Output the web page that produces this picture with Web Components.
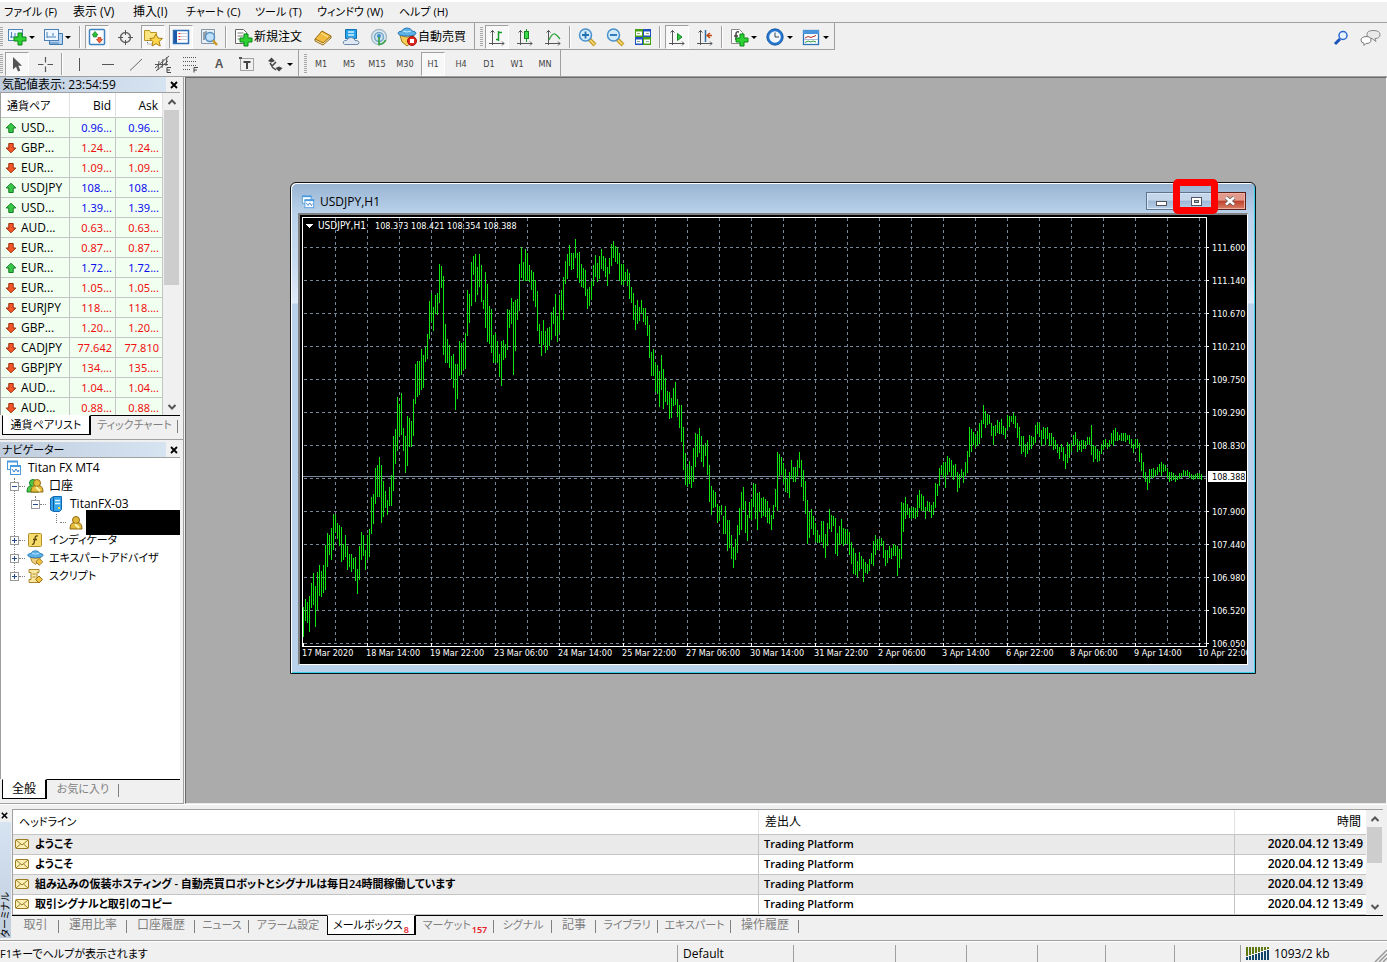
<!DOCTYPE html>
<html lang="ja">
<head>
<meta charset="utf-8">
<title>Titan FX MT4</title>
<style>
  body { margin: 0; font: 12px/16px "Open Sans", "Noto Sans CJK JP", sans-serif; font-feature-settings: "palt"; color: #000; background: #f0f0f0; }
</style>
</head>
<body>
<mt-app></mt-app>
<script>
/* ---------- icons: [viewBox, drawing, optional drawn size] ---------- */
const AXES = '<g stroke="#555" fill="none"><path d="M7.500 5v15M4 18.500h15"/><path d="M5.500 7.500l2-2 2 2M17 16.500l2 2-2 2"/></g>';
const PLUS = (x, y) => `<path d="M${x} ${y}h4v4h4v4h-4v4h-4v-4h-4v-4h4z" fill="#2fd135" stroke="#078a12"/>`;
const PERSON = (x, y, c, s) => `<g fill="${c}" stroke="${s}"><path d="M${x} ${y + 13}q0-6 4-6.500h4q4 .5 4 6.500z"/><circle cx="${x + 6}" cy="${y + 4}" r="3.500"/></g><path d="M${x + 5} ${y + 8}l4 4" stroke="#fff6b0" stroke-width="2"/>`;
const HAT = '<path d="M3 8q0-1.500 4-2 1-3 5-3t5 3q4 .5 4 2 0 3-9 3t-9-3z" fill="#5cb2e6" stroke="#2a78b4"/><path d="M8 6q4 2 8 0" stroke="#c8ecff" fill="none"/>';
const ICONS = {
  newchart: ['0 0 24 24', '<rect x="3.500" y="4.500" width="14" height="11" fill="#eef6ff" stroke="#4d86b8"/><path d="M6.500 7v6M5 12h9M10 8v3" stroke="#4d86b8"/>' + PLUS(13, 8)],
  profiles: ['0 0 24 24', '<path d="M8.500 8.500h13v11h-13z" fill="#b5d3f0" stroke="#3b78b4"/><rect x="3.500" y="4.500" width="14" height="11" fill="#eef6ff" stroke="#4a80b5"/><path d="M6 7v6M6 12h9M12 8v3M9 18h9" stroke="#4a80b5"/>'],
  market: ['0 0 24 24', '<rect x="4.500" y="4.500" width="15" height="15" rx="1" fill="#fff" stroke="#3e83c0" stroke-width="1.500"/><path d="M10 6.500l3 3.500h-1.500v2h-3v-2H7z" fill="#2cbf3a" stroke="#14862a" stroke-width=".7"/><path d="M14.500 18l3-3.500H16v-2h-3v2h-1.500z" fill="#f0623a" stroke="#b8360e" stroke-width=".7"/>'],
  cross: ['0 0 24 24', '<circle cx="12.500" cy="12.500" r="5" fill="none" stroke="#666" stroke-width="1.500"/><path d="M12.500 5v5M12.500 15v5M5 12.500h5M15 12.500h5" stroke="#555"/>'],
  navi: ['0 0 24 24', '<path d="M3.500 5.500h5l1 2h6v8h-12z" fill="#fbe580" stroke="#b89620"/><path d="M6.500 15v4h5" stroke="#777" stroke-dasharray="1 1" fill="none"/><path d="M15 9l2 4 4.500.5-3.300 3 1 4.500-4.200-2.300-4 2.300.8-4.500-3-3 4-.5z" fill="#ffd54a" stroke="#a88018"/>'],
  terminal: ['0 0 24 24', '<rect x="4.500" y="5.500" width="15" height="13" fill="#fff" stroke="#2f6fb6" stroke-width="1.500"/><path d="M6.500 6v12" stroke="#1d58a8" stroke-width="3"/><path d="M9.500 8.500h2M9.500 11.500h2M9.500 14.500h2" stroke="#d33"/><path d="M12 8.500h6M12 11.500h6M12 14.500h6" stroke="#ccd"/>'],
  tester: ['0 0 24 24', '<path d="M4.500 4.500h13v14h-13z" fill="#e6eef6" stroke="#8797a8"/><path d="M7 7v8M9 6v6M14 7v5" stroke="#456"/><circle cx="13" cy="12" r="4.500" fill="#bfe0f8" stroke="#5590c0" stroke-width="1.500"/><path d="M16 15.500l4 4.500" stroke="#c99a22" stroke-width="2.500"/>'],
  order: ['0 0 24 24', '<path d="M4.500 4.500h8l3 3v11h-11z" fill="#fff" stroke="#666"/><path d="M6.500 8h6M6.500 11h6M6.500 14h6" stroke="#777"/>' + PLUS(13, 9)],
  book: ['0 0 24 24', '<path d="M4 14l7-8 9 5-8 8z" fill="#f0bb3e" stroke="#9a6a10"/><path d="M4 14v2l8 4 8-7v-2l-8 7z" fill="#fff3c4" stroke="#9a6a10"/><path d="M10 8l7 4" stroke="#ffe9a0"/>'],
  cloud: ['0 0 24 24', '<path d="M6.500 4.500h11v9h-11z" fill="#29a3e8" stroke="#1272b4"/><path d="M9 7h6M9 10h6" stroke="#d8f2ff" stroke-width="1.500"/><path d="M5.500 19.500q-2-1-1-3 1-1.500 3-1 1.500-3.500 5-3 3 .3 3.500 3 3.500-.5 4 2 0 2-2 2z" fill="#dfe8f2" stroke="#6a86a8"/>'],
  signal: ['0 0 24 24', '<circle cx="12" cy="12" r="7.500" fill="#e4edf2" stroke="#a6bccb" stroke-width="1.500"/><circle cx="12" cy="12" r="4.500" fill="#cfe2ee" stroke="#6fa6c6" stroke-width="1.500"/><circle cx="12" cy="11" r="2" fill="#3d8ec4"/><path d="M12 12v7.500q5-.5 6.500-4.500" fill="none" stroke="#3ea44c" stroke-width="1.800"/>'],
  auto: ['0 0 24 24', '<path d="M5 10q7 4 14 0l-2 7-5 4-5-4z" fill="#f5cc58" stroke="#a07a18"/>' + HAT + '<circle cx="17" cy="16" r="4.500" fill="#e0261c" stroke="#a8120c"/><path d="M15 14h4v4h-4z" fill="#fff"/>'],
  bar: ['0 0 24 24', AXES + '<path d="M13.500 6v10M11 14.500h2M14 7.500h3" stroke="#189a28" stroke-width="1.500"/>'],
  candle: ['0 0 24 24', AXES + '<path d="M13.500 4v13" stroke="#189a28"/><rect x="11.500" y="6.500" width="4" height="7" fill="#3bd84a" stroke="#128a20"/>'],
  line: ['0 0 24 24', AXES + '<path d="M8 15q3-7 6-6 2 1 5 5" stroke="#2aa53a" fill="none" stroke-width="1.300"/>'],
  zin: ['0 0 24 24', '<path d="M14 14l6 6" stroke="#c79a25" stroke-width="4"/><path d="M15 15l4.500 4.500" stroke="#ffe27c" stroke-width="1.500"/><circle cx="10.500" cy="10" r="6" fill="#d2ebfb" stroke="#4a90cc" stroke-width="1.500"/><path d="M7 10h7M10.500 6.500v7" stroke="#2470b0" stroke-width="1.800"/>'],
  zout: ['0 0 24 24', '<path d="M14 14l6 6" stroke="#c79a25" stroke-width="4"/><path d="M15 15l4.500 4.500" stroke="#ffe27c" stroke-width="1.500"/><circle cx="10.500" cy="10" r="6" fill="#d2ebfb" stroke="#4a90cc" stroke-width="1.500"/><path d="M7 10h7" stroke="#2470b0" stroke-width="1.800"/>'],
  tile: ['0 0 24 24', '<path d="M4 4h8v8H4zM12 12h8v8h-8z" fill="#48a012"/><path d="M12 4h8v8h-8zM4 12h8v8H4z" fill="#1f50c0"/><path d="M5 6.500h6v4H5zM13 6.500h6v4h-6zM5 14.500h6v4H5zM13 14.500h6v4h-6z" fill="#fff"/><path d="M6 8.500h3M15 8.500h3M6 16.500h3M15 16.500h3" stroke="#8a8"/>'],
  scroll: ['0 0 24 24', AXES + '<path d="M12.500 8.500l4.500 3.500-4.500 3.500z" fill="#35c545" stroke="#128a20"/>'],
  shift: ['0 0 24 24', AXES + '<path d="M12.500 5v12" stroke="#2f6fa8" stroke-width="1.500"/><path d="M19 10.500h-4M17 8l-3 2.500 3 2.500" stroke="#c24a14" fill="none" stroke-width="1.500"/>'],
  indi: ['0 0 24 24', '<path d="M4.500 4.500h8l3 3v11h-11z" fill="#fff" stroke="#888"/><path d="M12 7q-3-1-3 2v6M7 11h4" stroke="#444" fill="none" stroke-width="1.500"/>' + PLUS(13, 9)],
  clock: ['0 0 24 24', '<circle cx="12" cy="12" r="7" fill="#f2f7fc" stroke="#2476cf" stroke-width="2.500"/><circle cx="12" cy="12" r="8.200" fill="none" stroke="#0f4e9c" stroke-width=".8"/><path d="M12 7.500V12h4" fill="none" stroke="#345"/>'],
  templ: ['0 0 24 24', '<rect x="4.500" y="5.500" width="15" height="14" fill="#fff" stroke="#2c74b8" stroke-width="1.300"/><path d="M4 5h16v4H4z" fill="#4a96dc"/><path d="M6 13l3-1.500 3 1 5-2" stroke="#b03018" fill="none"/><path d="M6 17.500l3-1.500 3 1 2-1 3 1" stroke="#2a9a3a" fill="none"/><path d="M5 14.500h14" stroke="#abd"/>'],
  search: ['0 0 24 24', '<path d="M11 13l-5 5" stroke="#1c53b8" stroke-width="3"/><circle cx="14" cy="9.500" r="4" fill="#e9f3fd" stroke="#2a67d0" stroke-width="1.500"/>'],
  chat: ['0 0 24 24', '<path d="M14 4.500q7 0 7 4t-5 4l1 3-4-3q-5 0-5-4t6-4z" fill="#e9e9e9" stroke="#888"/><path d="M7 10.500q5 0 5 3.500t-5 3.500l-2 2v-2.200q-3-.5-3-3.300t5-3.500z" fill="#fff" stroke="#777"/>'],
  arrow: ['0 0 24 24', '<path d="M8 5v12.500l3-2.800 2 4.800 2.300-1-2-4.700H17z" fill="#555"/>'],
  cursor: ['0 0 24 24', '<path d="M12.500 5v5.500M12.500 14.500V20M5 12.500h5.500M14.500 12.500H20" stroke="#555" stroke-width="1.200"/>'],
  vline: ['0 0 24 24', '<path d="M12.500 6v13" stroke="#555"/>'],
  hline: ['0 0 24 24', '<path d="M7 12.500h12" stroke="#555"/>'],
  trend: ['0 0 24 24', '<path d="M7 18.500L19 7" stroke="#666"/>'],
  chan: ['0 0 24 24', '<g stroke="#555" fill="none"><path d="M4 16L18 4M5 19L17 9M8 9l-1 9M12 7l-1 9M16 5l-1 9M4 12.500h13"/></g><path d="M20 15.500h-4v5h4M16 18h3" stroke="#444" fill="none"/>'],
  fibo: ['0 0 24 24', '<path d="M4 5.500h14M4 9.500h14M4 13.500h14M4 17.500h8" stroke="#555" stroke-dasharray="1 1"/><path d="M19 15.500h-4v5M15 18h3" stroke="#444" fill="none"/>'],
  tbox: ['0 0 24 24', '<path d="M5.500 6.500h13v12h-13z" fill="none" stroke="#555" stroke-dasharray="1 1"/><path d="M8.500 10h7M12 10v7" stroke="#444" stroke-width="2"/><path d="M4 5h3v2H4z" fill="#555"/>'],
  arrows: ['0 0 24 24', '<path d="M5 9l3.500-3.500L12 9l-3.500 1.500zM12.500 16l3.500-1.500 3.500 1.500-3.500 3.500z" fill="#444"/><path d="M7 11l2 3 4-4" stroke="#444" stroke-width="1.500" fill="none"/><path d="M9 15l4 3" stroke="#444" stroke-width="1.500"/>'],
  up: ['0 0 12 12', '<path d="M6 1.200L10.800 6H8.200v4.500H3.800V6H1.200z" fill="#38c848" stroke="#157a22"/>'],
  down: ['0 0 12 12', '<path d="M6 10.800L1.200 6h2.600V1.500h4.400V6h2.600z" fill="#f4572a" stroke="#9c2a0a"/>'],
  mail: ['0 0 14 10', '<rect x=".5" y=".5" width="13" height="9" rx="1" fill="#fdf0b4" stroke="#9a7a22"/><path d="M1 1l6 5 6-5M1 9l4.500-4M13 9L8.500 5" stroke="#9a7a22" fill="none"/>'],
  chart: ['0 0 16 16', '<rect x="1.500" y="1.500" width="10" height="8" fill="#fff" stroke="#4a9ae0"/><path d="M1 1.500h11" stroke="#4a9ae0" stroke-width="2"/><rect x="4.500" y="5.500" width="10" height="9" fill="#fff" stroke="#4a9ae0"/><path d="M4 6h11" stroke="#4a9ae0" stroke-width="2"/><path d="M6 9l2 3 2-3 2 3 1-2" fill="none" stroke="#3a80c8"/>'],
  people: ['0 0 18 16', PERSON(1, 1, '#4cc84c', '#1f7f24') + PERSON(5, 1, '#e6bd3c', '#8f6a10')],
  server: ['0 0 16 16', '<path d="M2.500 2.500l3-2h8v13l-2 2h-6l-3-1.500z" fill="#35a6ee" stroke="#1268b0"/><path d="M5.500 1v14" stroke="#0f5c9e"/><path d="M7 4.500h5M7 7.500h5" stroke="#dff3ff" stroke-width="1.500"/><path d="M10 12h2" stroke="#fd3" stroke-width="2"/>'],
  person: ['0 0 14 16', PERSON(1, 2, '#e2b93a', '#8f6a10')],
  func: ['0 0 16 16', '<rect x="1.500" y="1.500" width="13" height="13" rx="1" fill="#f7dc6c" stroke="#b08f28"/><path d="M11 4q-3-1-3 3l-1 4q-.5 2-2 1M6 7.500h4" fill="none" stroke="#5a4408" stroke-width="1.300"/>'],
  expert: ['1 1 21 21', '<path d="M6 10q6 4 12 0l-2 6-4 3-4-3z" fill="#f0d080" stroke="#9c7a28"/>' + HAT + '<path d="M16.500 12l4 4-4 4-4-4z" fill="#f0c440" stroke="#967018"/>', 18],
  script: ['0 0 16 16', '<path d="M2 1.500h10v3h-2v7h2v3H2v-3h2v-7H2z" fill="#fbe8a0" stroke="#a8862c"/><path d="M5.500 6h3M5.500 9h3" stroke="#a8862c"/><path d="M12 8l3.500 3.500L12 15l-3.500-3.500z" fill="#f0c440" stroke="#967018"/>'],
  close: ['0 0 10 10', '<path d="M2 2l6 6M8 2L2 8" stroke="#000" stroke-width="1.800"/>'],
  chevup: ['0 0 10 10', '<path d="M1.500 7L5 3.500 8.500 7" fill="none" stroke="#555" stroke-width="2"/>'],
  chevdown: ['0 0 10 10', '<path d="M1.500 3L5 6.500 8.500 3" fill="none" stroke="#555" stroke-width="2"/>'],
  traffic: ['0 0 24 14', '<path d="' + [0,3,6,9,12,15,18,21].map((x, i) => `M${x} 0h2v${9 - i}h-2z`).join('') + '" fill="#5f7a10"/><path d="' + [0,3,6,9,12,15,18,21].map((x, i) => `M${x} ${10 - i}h2V13h-2z`).join('') + '" fill="#10466a"/>']
};

/* ---------- small base class ---------- */
class Base extends HTMLElement {
  connectedCallback() {
    if (this.shadowRoot) return;
    const t = document.createElement('template');
    t.innerHTML = '<style>*{box-sizing:border-box}button{font:inherit;color:inherit;font-feature-settings:inherit;border:0;background:none;padding:0;margin:0}.k{font-size:11px}' + this.css() + '</style>' + this.html();
    this.attachShadow({ mode: 'open' }).append(t.content.cloneNode(true));
  }
  attr(n, d = '') { return this.hasAttribute(n) ? this.getAttribute(n) : d; }
}
const def = (n, css, html) => customElements.define(n, class extends Base {
  css() { return css; }
  html() { return typeof html === 'function' ? html(this) : html; }
});
/* labels with katakana or hiragana are set one step smaller */
const kana = t => /[\u3041-\u30ff]/.test(t) ? 'k' : '';

def('mt-icon', ':host{display:inline-flex;flex:none}svg{display:block}', el => {
  const [vb, body, size] = ICONS[el.attr('name')];
  const [, , w, h] = vb.split(' ');
  return `<svg viewBox="${vb}" width="${el.attr('size', size || w)}" height="${el.attr('size', size || h)}" aria-hidden="true">${body}</svg>`;
});

/* ---------- menu ---------- */
def('mt-menu', `:host{display:block;border-top:2px solid #fff;border-bottom:1px solid #a0a0a0}
  nav{display:grid;grid-template-columns:69px 60px 53px 69px 62px 82px auto;height:20px;padding-left:4px;align-items:center}
  button{text-align:left;white-space:nowrap}`,
  '<nav>' + ['ファイル (F)', '表示 (V)', '挿入(I)', 'チャート (C)', 'ツール (T)', 'ウィンドウ (W)', 'ヘルプ (H)'].map(t => `<button class="${kana(t)}">${t}</button>`).join('') + '</nav>');

/* ---------- toolbar pieces ---------- */
def('mt-tool', `:host{display:flex;flex:none}
  button{display:flex;align-items:center;height:24px;min-width:24px;justify-content:center;border:1px solid transparent;white-space:nowrap}
  :host([on]) button{border-color:#a0a0a0 #fff #fff #a0a0a0;background:#f8f8f8}
  :host([menu]) button{width:32px;justify-content:flex-start}
  :host([frame]) button{font:9px/12px "DejaVu Sans Condensed","DejaVu Sans",sans-serif;color:#444}
  :host([letter]) button{font:bold 12px/16px "Liberation Sans",sans-serif;color:#555}
  :host([text]) button{padding-right:4px}
  mt-icon{margin:0 -1px}
  i{border:3px solid transparent;border-top-color:#000;border-bottom:0;margin-left:1px}`,
  el => `<button ${el.attr('icon') && !el.hasAttribute('text') ? `aria-label="${el.attr('icon')}"` : ''}>${el.attr('icon') ? `<mt-icon name="${el.attr('icon')}"></mt-icon>` : ''}<slot></slot>${el.hasAttribute('menu') ? '<i></i>' : ''}</button>`);
def('mt-sep', ':host{display:block;flex:none;width:2px;height:22px;border-left:1px solid #a0a0a0;border-right:1px solid #fff}', '');
def('mt-group', `:host{display:flex;box-sizing:border-box;align-items:center;gap:4px;height:100%;padding:2px 3px 0 0;border-right:1px solid #a0a0a0;border-bottom:1px solid #a0a0a0}
  .grip{width:3px;height:20px;margin:0 -2px 0 var(--start,0);background:repeating-linear-gradient(#a8a8a8 0 1px,#f0f0f0 1px 2px)}`, '<span class="grip"></span><slot></slot>');

def('mt-toolbars', `:host{display:block;border-bottom:1px solid #a0a0a0}
  .row{display:flex;height:27px;align-items:center}
  .row.two{height:26px}.row.two mt-group{border-bottom:0}
  mt-group.n{--start:5px}
  .wide{margin-left:2px}
  .right{margin-left:auto;display:flex;gap:6px;padding:2px 4px 0 0}`,
  () => {
    const b = (icon, extra = '') => `<mt-tool icon="${icon}" ${extra}></mt-tool>`;
    const s = '<mt-sep></mt-sep>';
    return `<div class="row"><mt-group>${b('newchart', 'menu')}${b('profiles', 'menu')}<mt-sep class="wide"></mt-sep>${b('market', 'on')}${b('cross')}${b('navi', 'on')}${b('terminal', 'on')}${b('tester')}${s}
    <mt-tool icon="order" text>新規注文</mt-tool>${b('book')}${b('cloud')}${b('signal')}<mt-tool icon="auto" text>自動売買</mt-tool></mt-group>
    <mt-group class="n">${b('bar', 'on')}${b('candle')}${b('line')}${s}${b('zin')}${b('zout')}${b('tile')}${s}${b('scroll', 'on')}${b('shift')}${s}${b('indi', 'menu')}${b('clock', 'menu')}${b('templ', 'menu')}</mt-group>
    <div class="right">${b('search')}${b('chat')}</div></div>
    <div class="row two"><mt-group>${b('arrow', 'on')}${b('cursor')}${s}${b('vline')}${b('hline')}${b('trend')}${b('chan')}${b('fibo')}<mt-tool letter>A</mt-tool>${b('tbox')}${b('arrows', 'menu')}</mt-group>
    <mt-group class="n">${['M1', 'M5', 'M15', 'M30', 'H1', 'H4', 'D1', 'W1', 'MN'].map(t => `<mt-tool frame ${t === 'H1' ? 'on' : ''}>${t}</mt-tool>`).join('')}</mt-group></div>`;
  });

/* ---------- shared panel pieces ---------- */
def('mt-title', `:host{display:flex;height:15px;align-items:center;padding-right:3px}
  span{flex:1;height:15px;line-height:15px;padding-left:2px;background:linear-gradient(90deg,#bfcddd,#d6e4f2);white-space:nowrap;overflow:hidden;margin-right:2px}
  button{width:12px;height:12px;display:flex;align-items:center;justify-content:center}`,
  '<span><slot></slot></span><button aria-label="閉じる"><mt-icon name="close"></mt-icon></button>');

def('mt-scroll', `:host{display:flex;flex-direction:column;flex:none;width:17px;background:#f0f0f0}
  button{height:17px;display:flex;align-items:center;justify-content:center;flex:none}
  .track{flex:1;padding:0 1px}.thumb{height:var(--thumb);background:#cdcdcd}`,
  '<button aria-label="上へ"><mt-icon name="chevup"></mt-icon></button><div class="track"><div class="thumb"></div></div><button aria-label="下へ"><mt-icon name="chevdown"></mt-icon></button>');

/* items: "label|width|badge", a leading * marks the open tab */
def('mt-tabs', `:host{display:flex;height:20px;padding-left:var(--lead,0)}
  .rule{flex:1}
  button,.rule{border-top:1px solid #000}
  button{height:20px;line-height:18px;color:#808080;white-space:nowrap;display:flex;justify-content:center;align-items:flex-start;position:relative}
  button.sep::after{content:"";position:absolute;right:0;top:4px;height:13px;border-right:1px solid #808080}
  button.on{background:#fff;color:#000;border:1px solid #000;border-top-color:#fff;border-right-width:2px}
  sub{font:9px/12px "Noto Sans",sans-serif;font-weight:600;color:#e8202c;padding-top:8px;margin-left:1px}`,
  el => { const items = el.attr('items').split(',');
    return items.map((t, i) => {
      const [l, w, b] = t.replace('*', '').split('|'), on = t[0] === '*', next = (items[i + 1] || '')[0] === '*';
      return `<button role="tab" class="${on ? 'on' : next ? '' : 'sep'} ${kana(l)}" style="width:${w}px">${l}${b ? `<sub>${b}</sub>` : ''}</button>`;
    }).join('') + '<span class="rule"></span>'; });

/* ---------- market watch ---------- */
const QUOTES = ['u|USD...|0.96...|0.96...', 'd|GBP...|1.24...|1.24...', 'd|EUR...|1.09...|1.09...', 'u|USDJPY|108....|108....', 'u|USD...|1.39...|1.39...', 'd|AUD...|0.63...|0.63...', 'd|EUR...|0.87...|0.87...', 'u|EUR...|1.72...|1.72...', 'd|EUR...|1.05...|1.05...', 'd|EURJPY|118....|118....', 'd|GBP...|1.20...|1.20...', 'd|CADJPY|77.642|77.810', 'd|GBPJPY|134....|135....', 'd|AUD...|1.04...|1.04...', 'd|AUD...|0.88...|0.88...'];
def('mt-market', `:host{display:block;padding-bottom:4px;border-bottom:1px solid #a0a0a0}
  .pane{display:flex;height:323px;overflow:hidden;margin-right:3px;border-top:1px solid #a0a0a0;border-left:1px solid #a0a0a0}
  table{flex:1;table-layout:fixed;border-collapse:separate;border-spacing:0;height:max-content;width:0}
  th{height:25px;font-weight:400;background:#fff;padding:2px 4px 0 6px;text-align:right;border-right:1px solid #e2e2e2;border-bottom:1px solid #c4c4c4}
  th:first-child{text-align:left}
  td{height:20px;background:#f0fff0;padding:0 3px 0 4px;white-space:nowrap;border-right:1px solid #c4c4c4;border-bottom:1px solid #c4c4c4}
  td:first-child div{display:flex;align-items:center;gap:4px;line-height:16px}
  td+td{text-align:right;font:11px/16px "Noto Sans",sans-serif;color:#f01010;padding:0 3px 0 0}
  .u td+td{color:#0c0cf0}
  mt-scroll{--thumb:175px}
  mt-tabs{margin-right:3px;--lead:2px}`,
  `<mt-title>気配値表示: 23:54:59</mt-title><div class="pane"><table><colgroup><col style="width:69px"><col style="width:46px"><col></colgroup><tr><th class="k">通貨ペア</th><th>Bid</th><th>Ask</th></tr>` +
  QUOTES.map(q => { const [d, s, b, a] = q.split('|'); return `<tr class="${d}"><td><div><mt-icon name="${d === 'u' ? 'up' : 'down'}"></mt-icon><span>${s}</span></div></td><td>${b}</td><td>${a}</td></tr>`; }).join('') +
  `</table><mt-scroll></mt-scroll></div><mt-tabs items="*通貨ペアリスト|89,ティックチャート|87"></mt-tabs>`);

/* ---------- navigator ---------- */
def('mt-node', `:host{display:flex;align-items:center;height:18px;padding-left:var(--pad);white-space:nowrap}
  .box{width:9px;height:9px;border:1px solid #999;background:#fff;display:flex;align-items:center;justify-content:center;flex:none;position:relative}
  .box::before{content:"";position:absolute;width:5px;border-top:1px solid #234a8c}
  .box.plus::after{content:"";position:absolute;height:5px;border-left:1px solid #234a8c}
  .dots{width:6px;border-top:1px dotted #808080;flex:none}
  mt-icon{width:20px;justify-content:center}
  .lab{margin-left:4px}
  .mask{width:94px;height:25px;background:#000;flex:none}`,
  el => { const x = el.attr('box');
    return (x ? `<span class="box ${x}"></span>` : '') + (el.hasAttribute('dots') ? '<span class="dots"></span>' : '') + `<mt-icon name="${el.attr('icon')}"></mt-icon>` + (el.hasAttribute('masked') ? '<span class="mask"></span>' : `<span class="lab ${kana(el.textContent)}"><slot></slot></span>`); });
def('mt-navigator', `:host{display:flex;flex-direction:column;flex:1;min-height:0;padding-top:2px;border-bottom:1px solid #a0a0a0;padding-bottom:4px}
  .tree{flex:1;background:#fff;border-left:1px solid #a0a0a0;border-top:1px solid #a0a0a0;margin-right:3px;padding-top:1px;overflow:hidden;position:relative}
  .stem{position:absolute;left:13px;top:20px;height:100px;border-left:1px dotted #808080}
  .stem.b{left:34px;top:38px;height:10px}.stem.c{left:55px;top:56px;height:9px}
  mt-title{font-size:11px}
  mt-node{--pad:3px}mt-node.l1{--pad:9px}mt-node.l2{--pad:30px}mt-node.l3{--pad:59px}
  mt-tabs{margin-right:3px;--lead:2px}`,
  `<mt-title>ナビゲーター</mt-title><div class="tree"><span class="stem"></span><span class="stem b"></span><span class="stem c"></span>
  <mt-node icon="chart">Titan FX MT4</mt-node>
  <mt-node class="l1" box="minus" dots icon="people">口座</mt-node>
  <mt-node class="l2" box="minus" dots icon="server">TitanFX-03</mt-node>
  <mt-node class="l3" dots icon="person" masked></mt-node>
  <mt-node class="l1" box="plus" dots icon="func">インディケータ</mt-node>
  <mt-node class="l1" box="plus" dots icon="expert">エキスパートアドバイザ</mt-node>
  <mt-node class="l1" box="plus" dots icon="script">スクリプト</mt-node></div>
  <mt-tabs items="*全般|45,お気に入り|72"></mt-tabs>`);

/* ---------- price chart: one "high-low" pair per hour ---------- */
const BARS = `607-637 599-621 602-623 596-632 583-608 573-605 586-627 572-610 565-596 571-597 565-593 545-590 533-567 535-555 528-560 514-550 515-532 523-539 525-546 527-562 544-560 535-557 546-570 554-567 554-572 558-569 557-581 569-594 546-580 532-560 535-556 550-570 535-560 529-557 497-534 494-524 468-504 465-497 457-497 465-523 481-517 491-508 500-515 487-506 475-506 436-491 429-464 397-451 404-436 393-435 428-451 436-473 416-466 418-447 421-447 399-436 364-404 361-397 361-395 349-390 355-388 347-362 334-359 301-339 293-322 307-331 295-314 293-315 264-303 266-288 276-355 324-363 339-363 345-368 356-379 354-388 364-410 364-399 341-376 343-375 342-370 333-369 290-336 294-323 262-306 256-275 254-302 267-295 254-287 265-302 300-309 272-328 284-342 306-344 309-353 335-363 333-363 341-363 354-377 341-386 340-360 344-358 309-350 310-328 298-324 302-375 300-351 299-320 264-311 247-278 262-281 249-281 253-281 265-282 270-290 272-301 280-307 291-331 324-344 331-356 320-345 331-353 328-350 327-346 312-340 307-324 294-336 316-342 295-333 290-310 277-320 261-284 254-279 245-266 253-270 253-269 239-258 253-278 252-283 264-287 268-288 270-296 289-309 287-306 281-300 265-286 255-277 263-282 256-279 249-269 256-271 258-277 267-286 258-274 244-266 241-258 246-262 247-264 253-281 264-285 264-285 272-281 269-286 273-299 287-303 293-320 305-330 300-324 307-321 300-314 308-322 308-325 316-336 325-358 352-376 349-376 363-392 365-394 371-407 355-390 369-409 378-402 391-405 392-419 398-418 388-406 382-405 399-417 405-428 405-442 427-470 453-485 467-487 461-484 466-488 448-482 433-467 434-457 428-453 436-462 445-467 443-456 440-475 465-502 486-515 490-508 492-507 504-523 506-521 505-515 516-534 506-534 520-551 520-548 535-559 547-568 539-560 525-553 508-535 492-530 487-510 501-533 515-541 502-518 499-520 483-507 484-519 493-530 492-512 498-518 497-516 499-517 501-523 508-524 515-530 505-519 489-507 452-511 454-476 457-475 463-483 469-492 478-493 472-498 460-479 467-482 467-482 460-477 452-468 460-487 470-501 481-514 500-544 512-538 509-529 516-535 523-542 530-543 535-543 521-542 521-548 534-558 523-546 509-529 515-532 516-526 518-554 533-556 526-545 519-544 528-546 529-544 529-544 532-555 542-564 548-574 553-575 561-577 552-571 556-569 559-582 562-573 564-574 559-571 553-564 541-566 535-555 539-550 539-550 538-546 541-558 550-566 550-563 546-558 548-559 544-556 545-556 546-576 549-568 502-559 503-532 497-519 504-515 508-518 507-519 507-518 508-519 495-517 490-508 494-511 496-511 507-519 501-511 502-512 505-518 502-515 483-508 484-496 468-486 465-475 462-478 462-488 456-475 458-472 460-477 465-480 464-476 472-492 474-488 469-478 472-483 462-476 451-473 427-457 429-452 432-445 435-448 431-446 423-444 420-438 405-424 411-428 414-425 415-424 423-436 426-445 425-436 420-433 422-434 419-434 426-435 428-439 415-430 416-427 416-422 413-424 416-428 423-438 427-446 436-454 436-452 444-457 442-454 435-450 436-449 437-445 425-443 422-434 423-437 430-446 427-439 428-445 427-439 433-446 433-446 437-450 440-449 444-453 447-459 444-452 447-461 454-469 442-463 444-458 443-452 435-446 432-445 439-452 441-450 440-452 440-449 441-449 437-445 437-445 425-455 445-462 446-459 449-462 451-461 444-454 440-450 439-447 443-449 440-447 433-444 430-446 428-441 432-441 435-440 433-441 433-441 433-442 435-440 435-444 439-448 444-453 439-448 439-448 443-462 453-471 462-478 472-482 477-490 469-483 469-478 468-478 470-476 467-475 464-472 462-476 464-472 465-471 468-478 472-482 472-481 473-480 475-482 476-480 473-479 473-478 470-476 471-476 470-476 472-478 474-479 475-480 474-479 473-479 473-479 474-480`.split(' ');
def('mt-chart', `:host{display:block;background:#000;overflow:hidden}svg{display:block;width:100%;height:auto}
  text{font:9px "DejaVu Sans Condensed","DejaVu Sans",sans-serif;fill:#fff}text.name{font-size:10px}`, () => {
  let grid = '', labels = '', ticks = '';
  for (let x = 335; x < 1206; x += 32) grid += `M${x}.5 218V642`;
  const prices = ['111.600', '111.140', '110.670', '110.210', '109.750', '109.290', '108.830', '', '107.900', '107.440', '106.980', '106.520', '106.050'];
  prices.forEach((p, i) => { const y = 247 + 33 * i; grid += `M304 ${y}.5H1206`; if (p) { ticks += `M1207 ${y}.5h2`; labels += `<text x="1212" y="${y + 4}">${p}</text>`; } });
  ['17 Mar 2020', '18 Mar 14:00', '19 Mar 22:00', '23 Mar 06:00', '24 Mar 14:00', '25 Mar 22:00', '27 Mar 06:00', '30 Mar 14:00', '31 Mar 22:00', '2 Apr 06:00', '3 Apr 14:00', '6 Apr 22:00', '8 Apr 06:00', '9 Apr 14:00', '10 Apr 22:00']
    .forEach((d, i) => { const x = 302 + 64 * i; ticks += `M${x + 1}.5 643v3`; labels += `<text x="${x}" y="656">${d}</text>`; });
  const bars = BARS.map((b, i) => { const [h, l] = b.split('-'); return `M${303 + 2 * i}.5 ${h}V${l}`; }).join('');
  return `<svg viewBox="300 215 947 449" role="img" aria-label="USDJPY H1" shape-rendering="crispEdges">
    <path d="${grid}" stroke="#778899" stroke-dasharray="3 3" fill="none"/><path d="M303 476.5H1206" stroke="#778899"/>
    <path d="${bars}" stroke="#12e612" fill="none"/>
    <path d="M302.5 646V217.5H1206.5V646.5H302" stroke="#fff" fill="none"/><path d="${ticks}" stroke="#fff"/>
    <path d="M306 224h7l-3.500 4z" fill="#fff"/>
    <text class="name" x="318" y="229">USDJPY,H1</text><text x="375" y="229">108.373 108.421 108.354 108.388</text>${labels}
    <path d="M1208 471h38v11h-38z" fill="#fff"/><text x="1212" y="480" style="fill:#000">108.388</text></svg>`;
});

def('mt-window', `:host{display:flex;box-sizing:border-box;flex-direction:column;border:1px solid #101418;border-radius:6px 6px 0 0;background:linear-gradient(#98b4d2,#b9d1ea 30px,#c9dcf0 80px,#dfebf8 120px,#b9d1ea 121px);
    box-shadow:inset 1px 1px #fff,inset -1px -1px #38d0e6;padding:1px 7px 8px}
  header{display:flex;align-items:center;height:29px;padding:6px 0 0 3px}
  h1{font:inherit;margin:0 0 0 5px;flex:1}
  .btns{display:flex;margin:0 2px 2px 0}
  .btns button{height:18px;display:flex;align-items:center;justify-content:center;border:1px solid #5b7591;box-shadow:inset 0 0 0 1px #dce8f5;background:linear-gradient(#c4d6ea 45%,#9db8d6 50%,#b9d0e8);width:31px}
  .btns button+button{width:40px;border-left:0}
  .btns button.x{width:29px;border-color:#5c2018;box-shadow:inset 0 0 0 1px #ecb0a4;background:linear-gradient(#e29a8c 45%,#c0402a 50%,#d88068)}
  .mark{position:absolute;right:37px;top:-4px;width:45px;height:35px;border:7px solid #f00;border-radius:5px}
  .inner{border:2px solid #808080;border-right:1px solid #fff;border-bottom:1px solid #fff}`,
  `<header><mt-icon name="chart" size="14"></mt-icon><h1>USDJPY,H1</h1><div class="btns">
  <button aria-label="最小化"><svg width="12" height="12"><rect x=".5" y="6.500" width="10" height="4" fill="#fff" stroke="#555"/></svg></button>
  <button aria-label="最大化"><svg width="12" height="12"><rect x=".5" y="2.500" width="10" height="8" fill="#fff" stroke="#556"/><rect x="3.500" y="5.500" width="4" height="2" fill="#9bb" stroke="#556"/></svg></button>
  <button class="x" aria-label="閉じる"><svg width="12" height="12"><path d="M1 2.500l8 7M9 2.500l-8 7" stroke="#555" stroke-width="4"/><path d="M1 2.500l8 7M9 2.500l-8 7" stroke="#fff" stroke-width="2.500"/></svg></button></div></header>
  <div class="inner"><mt-chart></mt-chart></div><span class="mark"></span>`);

/* ---------- terminal ---------- */
def('mt-terminal', `:host{display:flex;box-sizing:border-box;padding:4px 4px 0 0;border-top:1px solid #fff;border-bottom:1px solid #a0a0a0;height:137px}
  .side{width:12px;flex:none;display:flex;flex-direction:column;padding-bottom:2px}
  .side button{width:9px;height:13px;display:flex;align-items:center}
  .strip{flex:1;width:11px;background:linear-gradient(#d6e4f2,#bfcddd);writing-mode:sideways-lr;font-size:10px;line-height:11px;white-space:nowrap}
  .body{flex:1;display:flex;flex-direction:column;min-width:0}
  .pane{display:flex;border-top:1px solid #a0a0a0;border-left:1px solid #a0a0a0;height:106px;overflow:hidden}
  table{flex:1;table-layout:fixed;border-collapse:separate;border-spacing:0;background:#fff;height:max-content;width:0}
  th{height:25px;font-weight:400;text-align:left;padding:0 6px;border-right:1px solid #e2e2e2;border-bottom:1px solid #c4c4c4}
  th:last-child,td:last-child{text-align:right;border-right:0}
  th:last-child{padding-right:5px}
  td{height:20px;font-weight:600;font-size:11px;padding:0 5px 1px;border-right:1px solid #c4c4c4;border-bottom:1px solid #c4c4c4;white-space:nowrap;overflow:hidden}
  td:last-child{padding-right:3px;font-size:12px}
  tr:nth-child(even) td{background:#eaeaea}
  td:first-child{padding-left:2px}
  td div{display:flex;align-items:center;gap:6px}
  mt-scroll{--thumb:36px}`,
  `<div class="side"><button aria-label="閉じる"><mt-icon name="close" size="9"></mt-icon></button><div class="strip">ターミナル</div></div>
  <div class="body"><div class="pane"><table><colgroup><col><col style="width:476px"><col style="width:131px"></colgroup><tr><th class="k">ヘッドライン</th><th>差出人</th><th>時間</th></tr>` +
  ['ようこそ', 'ようこそ', '組み込みの仮装ホスティング - 自動売買ロボットとシグナルは毎日24時間稼働しています', '取引シグナルと取引のコピー'].map(t => `<tr><td><div><mt-icon name="mail"></mt-icon><span>${t}</span></div></td><td>Trading Platform</td><td>2020.04.12 13:49</td></tr>`).join('') +
  `</table><mt-scroll></mt-scroll></div><mt-tabs items="取引|47,運用比率|68,口座履歴|68,ニュース|54,アラーム設定|78,*メールボックス|89|8,マーケット|78|157,シグナル|58,記事|44,ライブラリ|62,エキスパート|73,操作履歴|68"></mt-tabs></div>`);

/* ---------- status bar ---------- */
def('mt-status', `:host{display:flex;box-sizing:border-box;height:21px;border-top:1px solid #fff;padding-top:3px;position:relative}
  span{border-left:1px solid #a0a0a0;width:var(--w);flex:none;padding-left:5px;white-space:nowrap;display:flex;align-items:center;gap:4px}
  span.first{flex:1;border:0;padding:0}
  .size{position:absolute;right:0;bottom:0}`,
  `<span class="first k">F1キーでヘルプが表示されます</span><span style="--w:116px">Default</span>` + [102, 71, 71, 68, 69, 66].map(w => `<span style="--w:${w}px"></span>`).join('') +
  `<span style="--w:147px"><mt-icon name="traffic"></mt-icon>1093/2 kb</span><svg class="size" width="13" height="13"><path d="M1 13L13 1M5 13l8-8M9 13l4-4" stroke="#999" stroke-width="1.500"/></svg>`);

/* ---------- page ---------- */
def('mt-app', `:host{display:flex;flex-direction:column;height:100vh;overflow:hidden}
  main{flex:1;display:flex;min-height:0}
  .left{width:184px;box-sizing:border-box;flex:none;display:flex;flex-direction:column;border-right:1px solid #a0a0a0}
  .space{flex:1;background:#ababab;border-top:1px solid #696969;border-left:1px solid #696969;border-right:1px solid #fff;border-bottom:1px solid #e8e8e8;margin-left:1px;position:relative;overflow:hidden}
  mt-window{position:absolute;left:104px;top:104px;width:966px}`,
  `<mt-menu></mt-menu><mt-toolbars></mt-toolbars><main><div class="left"><mt-market></mt-market><mt-navigator></mt-navigator></div><div class="space"><mt-window></mt-window></div></main><mt-terminal></mt-terminal><mt-status></mt-status>`);
</script>
</body>
</html>
